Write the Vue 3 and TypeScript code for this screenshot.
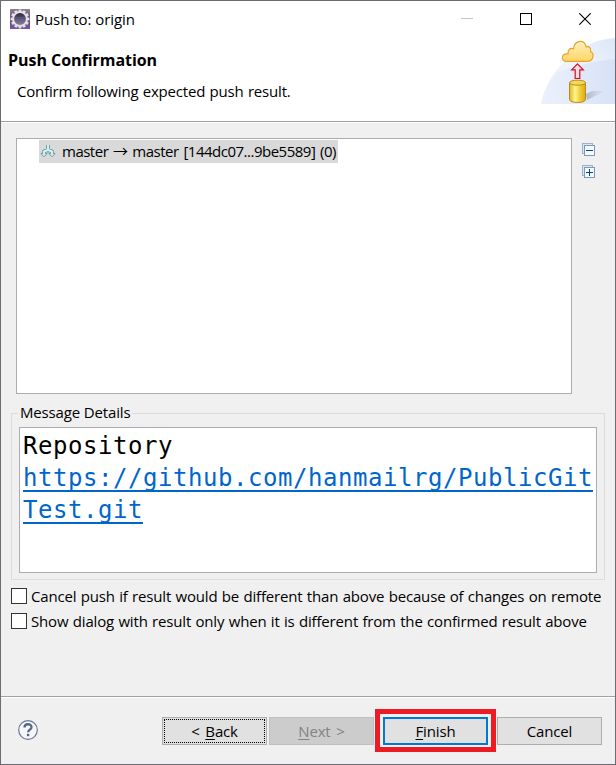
<script setup lang="ts">
import { ref } from 'vue'

interface Option {
  id: string
  label: string
  checked: boolean
}

const options = ref<Option[]>([
  { id: 'cancel', label: 'Cancel push if result would be different than above because of changes on remote', checked: false },
  { id: 'show', label: 'Show dialog with result only when it is different from the confirmed result above', checked: false },
])
const gearTeeth = Array.from({ length: 12 }, (_, i) => i * 30)
</script>

<template>
  <main class="dialog">
    <header class="titlebar">
      <svg class="app-icon" width="20" height="20" viewBox="0 0 20 20">
        <defs>
          <linearGradient id="appBg" x1="0" y1="0" x2="0" y2="1">
            <stop offset="0" stop-color="#8c8496" />
            <stop offset="0.5" stop-color="#5d4a86" />
            <stop offset="1" stop-color="#7656a6" />
          </linearGradient>
          <linearGradient id="lens" x1="0" y1="0" x2="0" y2="1">
            <stop offset="0" stop-color="#25203a" />
            <stop offset="1" stop-color="#8c84ae" />
          </linearGradient>
        </defs>
        <rect width="20" height="20" fill="url(#appBg)" />
        <g fill="#e6e1dc">
          <rect v-for="a in gearTeeth" :key="a" x="8.6" y="0.6" width="2.8" height="4" :transform="`rotate(${a} 10 10)`" />
        </g>
        <circle cx="10" cy="10" r="6.9" fill="url(#lens)" stroke="#e6e1dc" stroke-width="2" />
        <path d="M4.2 8.6h11.6M4 10.4h12M4.3 12.2h11.4" stroke="#a29bbd" stroke-opacity=".35" stroke-width=".6" />
      </svg>
      <span class="title">Push to: origin</span>
      <div class="window-controls">
        <svg width="12" height="12" viewBox="0 0 12 12"><path d="M0 5.5h12" stroke="#c4c4c4" /></svg>
        <svg width="12" height="12" viewBox="0 0 12 12"><rect x=".5" y=".5" width="11" height="11" fill="none" stroke="#000" /></svg>
        <svg width="12" height="12" viewBox="0 0 12 12"><path d="M.3.3l11.4 11.4M11.7.3L.3 11.7" stroke="#000" stroke-width="1.1" /></svg>
      </div>
    </header>

    <section class="banner">
      <div class="banner-text">
        <h1>Push Confirmation</h1>
        <p>Confirm following expected push result.</p>
      </div>
      <svg class="banner-art" width="74" height="66" viewBox="0 0 74 66">
        <defs>
          <linearGradient id="outer" x1="0" y1=".8" x2="1" y2="0">
            <stop offset="0" stop-color="#f1f5fc" />
            <stop offset=".65" stop-color="#ebf1fb" />
            <stop offset="1" stop-color="#d9e5f8" />
          </linearGradient>
          <linearGradient id="inner" x1="0" y1="0" x2="1" y2="0">
            <stop offset="0" stop-color="#eaf0fb" />
            <stop offset="1" stop-color="#d1ddf5" />
          </linearGradient>
          <linearGradient id="cloud" x1="0" y1="0" x2="0" y2="1">
            <stop offset="0" stop-color="#fff0c0" />
            <stop offset="1" stop-color="#ffd565" />
          </linearGradient>
          <linearGradient id="barrel" x1="0" y1="0" x2="1" y2="0">
            <stop offset="0" stop-color="#e1b51d" />
            <stop offset=".35" stop-color="#fff68e" />
            <stop offset=".65" stop-color="#f0cf38" />
            <stop offset="1" stop-color="#dda817" />
          </linearGradient>
          <linearGradient id="shade" x1="0" y1="0" x2="1" y2="0">
            <stop offset="0" stop-color="#aeb5c5" />
            <stop offset="1" stop-color="#cfd6e6" stop-opacity=".3" />
          </linearGradient>
        </defs>
        <path d="M0 66C3 46 17 26 37 12C50 4 62 1 75 0V66Z" fill="url(#outer)" />
        <path d="M0 66C2 55 8 42 16 34C35 28 53 23 75 21V66Z" fill="url(#inner)" fill-opacity=".75" />
        <path d="M45 56l6-3h13l-8 4-10 5Z" fill="url(#shade)" />
        <path d="M24.500 23.300C19.500 22.500 20.500 15 27 16C26.500 11.500 29.500 9.400 32.500 10.800C33.500 1.500 44.500 1 45 8.800C48.500 7.800 50.300 10.500 49.500 13.800C53.800 15.300 52.500 22.800 47 23.300Z" fill="url(#cloud)" stroke="#e2a62b" stroke-width="1.200" />
        <path d="M36.500 25.800l5.800 6h-3.500v8.700h-4.600v-8.700h-3.500Z" fill="#f7dce0" stroke="#cf1020" stroke-width="1.200" />
        <path d="M28.500 44.500v17c0 4 16 4 16 0v-17Z" fill="url(#barrel)" stroke="#b98a1c" stroke-width="1" />
        <ellipse cx="36.500" cy="44.700" rx="8" ry="2.500" fill="#f3d956" stroke="#b98a1c" stroke-width="1" />
      </svg>
    </section>

    <section class="body">
      <div class="tree-row">
        <div class="tree">
          <div class="tree-item">
            <svg width="16" height="16" viewBox="0 0 16 16" fill="none" stroke="#6f9ea2" stroke-width="1">
              <path d="M6.500 1v3.500q0 1-1 1H4.500q-2 0-2 2v2H.9L4 12.800l3.100-3.300H5.500V8.300h1.200Q8 8.300 8 7.200q0 1.100 1.300 1.100h1.200v1.200H8.900L12 12.800l3.100-3.300H13.500v-2q0-2-2-2h-1q-1 0-1-1V1" fill="#d4eef0" />
            </svg>
            <span>master → master [144dc07...9be5589] (0)</span>
          </div>
        </div>
        <div class="tree-tools">
          <svg v-for="kind in ['collapse', 'expand']" :key="kind" width="13" height="13" viewBox="0 0 13 13">
            <rect x=".5" y=".5" width="10" height="10" fill="#d5e8f5" stroke="#9fb1c9" />
            <rect x="2.500" y="2.500" width="10" height="10" fill="#f1fbff" stroke="#8496b5" />
            <path d="M4 7.500h7" stroke="#0b4384" />
            <path v-if="kind === 'expand'" d="M7.500 4v7" stroke="#0b4384" />
          </svg>
        </div>
      </div>

      <fieldset class="details">
        <legend><span>Message Details</span></legend>
        <div class="message">
          <div>Repository</div>
          <a>https://github.com/hanmailrg/PublicGitTest.git</a>
        </div>
      </fieldset>

      <div class="options">
        <label v-for="o in options" :key="o.id" :class="['option', o.id]">
          <input v-model="o.checked" type="checkbox" />
          <span>{{ o.label }}</span>
        </label>
      </div>
    </section>

    <footer class="footer">
      <svg class="help" width="20" height="20" viewBox="0 0 20 20" fill="none">
        <circle cx="10" cy="10" r="9.300" fill="#f4f6f9" stroke="#68789a" stroke-width="1.200" />
        <path d="M6.500 7.500C6.500 3.200 13.500 3.200 13.500 7.200C13.500 9.600 10.100 9.600 10.100 12.200" stroke="#566788" stroke-width="2.300" />
        <rect x="8.900" y="13.800" width="2.400" height="2.400" fill="#566788" />
      </svg>
      <div class="buttons">
        <button class="btn back" type="button"><span>&lt; <u>B</u>ack</span></button>
        <button class="btn next" type="button" disabled><span><u>N</u>ext &gt;</span></button>
        <div class="finish-wrap">
          <button class="btn finish" type="button"><span><u>F</u>inish</span></button>
          <div class="marker"></div>
        </div>
        <button class="btn" type="button"><span>Cancel</span></button>
      </div>
    </footer>
  </main>
</template>

<style>
body {
  margin: 0;
  background: #f0f0f0;
}
</style>

<style scoped>
.dialog {
  box-sizing: border-box;
  width: 616px;
  height: 765px;
  border: 1px solid #6c6b6f;
  background: #f0f0f0;
  display: flex;
  flex-direction: column;
  font-family: "Open Sans", "Noto Sans CJK KR", sans-serif;
  font-size: 15px;
  line-height: 20px;
  color: #000;
  white-space: nowrap;
}
svg {
  display: block;
  flex: none;
}
.titlebar {
  height: 37px;
  box-sizing: border-box;
  display: flex;
  align-items: center;
  padding: 0 24px 0 9px;
  background: #fff;
}
.app-icon {
  margin-top: -1px;
}
.title {
  margin: -2px 0 0 5px;
  letter-spacing: -0.05px;
}
.window-controls {
  margin-left: auto;
  display: flex;
  gap: 47px;
}
.window-controls svg {
  margin-top: -1px;
}
.banner {
  height: 83px;
  display: flex;
  justify-content: space-between;
  background: #fff;
  border-bottom: 1px solid #a0a0a0;
  box-shadow: 0 1px #fff;
}
.banner-text {
  padding: 12px 0 0 7px;
}
.banner-art {
  overflow: hidden;
}
h1 {
  margin: 0;
  font-size: 16px;
  line-height: 20px;
  font-weight: 700;
  letter-spacing: -0.04px;
}
.banner p {
  margin: 11px 0 0 9px;
  letter-spacing: -0.18px;
  word-spacing: 0.6px;
}
.body {
  flex: 1;
  padding: 16px 10px 0;
}
.tree-row {
  display: flex;
  gap: 10px;
  padding-left: 5px;
}
.tree {
  box-sizing: border-box;
  width: 556px;
  height: 256px;
  border: 1px solid #abadb3;
  background: #fff;
  padding: 1px 22px;
}
.tree-item {
  box-sizing: border-box;
  display: flex;
  align-items: center;
  gap: 6px;
  width: 299px;
  height: 23px;
  padding-left: 1px;
  background: #d9d9d9;
}
.tree-item span {
  margin-top: -2px;
  letter-spacing: -0.5px;
  word-spacing: 1.4px;
}
.tree-tools {
  display: flex;
  flex-direction: column;
  gap: 9px;
  padding-top: 5px;
}
.details {
  box-sizing: border-box;
  width: 594px;
  height: 177px;
  margin: 9px 0 0;
  border: 1px solid #dcdcdc;
  padding: 4px 7px 7px;
}
.details legend {
  height: 20px;
  margin-left: -1px;
  padding: 0 2px;
  letter-spacing: -0.15px;
}
.details legend span {
  display: block;
  margin-top: -1px;
}
.message {
  box-sizing: border-box;
  height: 146px;
  border: 1px solid #abadb3;
  background: #fff;
  padding: 2px 0 0 3px;
  font-family: "DejaVu Sans Mono", monospace;
  font-size: 24px;
  line-height: 32px;
  letter-spacing: 0.55px;
  white-space: normal;
  word-break: break-all;
}
.message a {
  color: #0066cc;
  text-decoration: underline;
  text-decoration-thickness: 2px;
  text-underline-offset: 4px;
  text-decoration-skip-ink: none;
}
.options {
  display: flex;
  flex-direction: column;
  gap: 5px;
  margin-top: 6px;
}
.option {
  display: flex;
  align-items: center;
  gap: 4px;
  height: 20px;
  letter-spacing: -0.16px;
  word-spacing: 0.6px;
}
.option input {
  appearance: none;
  box-sizing: border-box;
  width: 16px;
  height: 16px;
  margin: 0;
  border: 1px solid #333;
  background: #fff;
}
.footer {
  height: 68px;
  box-sizing: border-box;
  display: flex;
  justify-content: space-between;
  border-top: 1px solid #a0a0a0;
  box-shadow: inset 0 1px #fff;
  padding: 20px 13px 0 17px;
}
.help {
  margin-top: 3px;
}
.buttons {
  display: flex;
  height: 28px;
}
.btn {
  box-sizing: border-box;
  width: 105px;
  height: 28px;
  padding: 0;
  border: 1px solid #adadad;
  background: #e1e1e1;
  font: inherit;
  color: #000;
  letter-spacing: -0.15px;
  word-spacing: 2px;
}
u {
  text-decoration-thickness: 1px;
  text-underline-offset: 2px;
}
.back {
  margin-right: 2px;
  outline: 1px dotted #000;
  outline-offset: -3px;
}
.next {
  margin-right: 9px;
  border-color: #bfbfbf;
  background: #ccc;
  color: #838383;
}
.finish-wrap {
  position: relative;
  margin-right: 9px;
}
.finish {
  display: block;
  border: 2px solid #0078d7;
}
.marker {
  position: absolute;
  inset: -8px -8px -7px -8px;
  border: 5px solid #ed1c24;
  pointer-events: none;
}
</style>
